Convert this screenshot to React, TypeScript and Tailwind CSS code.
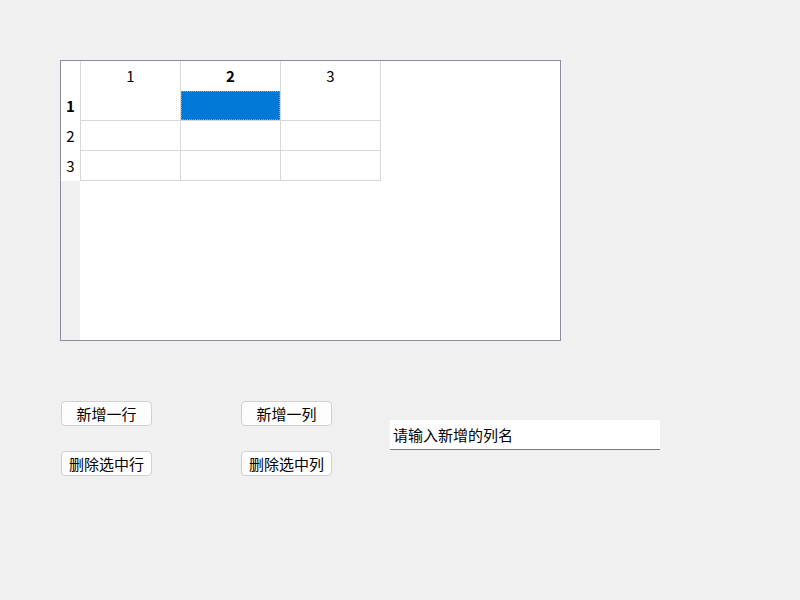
import React from "react";

const font = { fontFamily: '"Noto Sans CJK SC", "Noto Sans", sans-serif' };

const cols = ["1", "2", "3"];
const rows = ["1", "2", "3"];

export default function App() {
  return (
    <div
      className="w-[800px] h-[600px] bg-[#f0f0f0] pt-[60px] pl-[60px] text-[15px] text-black"
      style={font}
    >
      {/* table widget */}
      <div className="w-[501px] h-[281px] border border-[#8c8c9c] bg-white flex">
        <div className="w-[19px] flex flex-col">
          <div className="h-[30px] bg-white" />
          {rows.map((r, i) => (
            <div
              key={r}
              className={`h-[30px] flex items-center justify-center text-[15px] ${
                i === 0 ? "font-bold" : ""
              }`}
            >
              {r}
            </div>
          ))}
          <div className="flex-1 bg-[#f0f0f0]" />
        </div>
        <div className="flex flex-col">
          <div className="w-[301px] border-l border-[#d8d8d8]">
            <div className="flex h-[30px]">
              {cols.map((c, i) => (
                <div
                  key={c}
                  className={`w-[100px] border-r border-[#d8d8d8] flex items-center justify-center text-[15px] ${
                    i === 1 ? "font-bold" : ""
                  }`}
                >
                  {c}
                </div>
              ))}
            </div>
            {rows.map((r, ri) => (
              <div key={r} className="flex h-[30px]">
                {cols.map((c, ci) => (
                  <div
                    key={c}
                    className="w-[100px] border-r border-b border-[#d8d8d8]"
                  >
                    {ri === 0 && ci === 1 ? (
                      <div className="w-full h-full bg-[#0078d7] border border-dotted border-[#f0882a]" />
                    ) : null}
                  </div>
                ))}
              </div>
            ))}
          </div>
        </div>
      </div>

      {/* controls */}
      <div className="flex items-start mt-[60px] ml-px">
        <div className="grid grid-cols-[91px_91px] gap-x-[89px] gap-y-[25px]">
          <button className="h-[25px] bg-[#fdfdfd] border border-[#d0d0d0] rounded-[4px] leading-none">
            新增一行
          </button>
          <button className="h-[25px] bg-[#fdfdfd] border border-[#d0d0d0] rounded-[4px] leading-none">
            新增一列
          </button>
          <button className="h-[25px] bg-[#fdfdfd] border border-[#d0d0d0] rounded-[4px] leading-none">
            删除选中行
          </button>
          <button className="h-[25px] bg-[#fdfdfd] border border-[#d0d0d0] rounded-[4px] leading-none">
            删除选中列
          </button>
        </div>
        <input
          className="ml-[58px] mt-[19px] w-[270px] h-[30px] bg-white border-b border-[#7a7a7a] px-[3px] outline-none text-[15px]"
          style={font}
          defaultValue="请输入新增的列名"
        />
      </div>
    </div>
  );
}
